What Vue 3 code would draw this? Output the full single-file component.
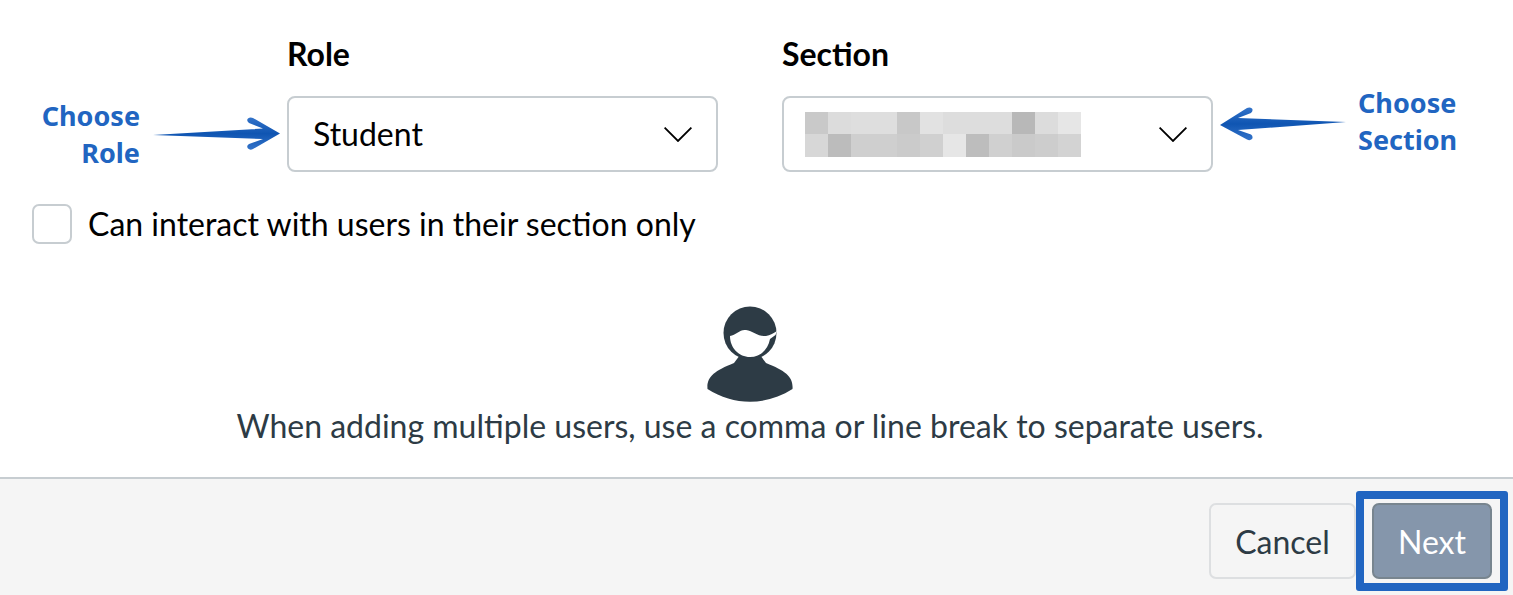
<script setup>
const blurred = [
  '#c9c9c9','#dcdcdc','#dedede','#dedede','#c8c8c8','#e2e2e2','#dddddd','#dddddd','#dddddd','#b8b8b8','#dcdcdc','#e6e6e6',
  '#d7d7d7','#bcbcbc','#cfcfcf','#cfcfcf','#cbcbcb','#d0d0d0','#e6e6e6','#bdbdbd','#d0d0d0','#cacaca','#cdcdcd','#d3d3d3'
]
</script>

<template>
  <div class="page">
    <section class="top">
      <div class="fields">
        <div class="label role-label">Role</div>
        <div class="label section-label">Section</div>

        <div class="side side-left">
          <div class="callout">Choose<br />Role</div>
          <svg class="arrow" width="127" height="34" viewBox="0 0 127 34">
            <defs>
              <linearGradient id="arrowA" x1="0" y1="0" x2="0" y2="1">
                <stop offset="0" stop-color="#3373c9" />
                <stop offset="0.5" stop-color="#0f55b2" />
                <stop offset="1" stop-color="#3373c9" />
              </linearGradient>
            </defs>
            <path d="M0 18 L110 11.500 L96 6 Q93 3.500 95 1.500 Q97 0 100 1 L127 16.500 L100 32 Q97 33.500 95 31.500 Q93 29 96 27 L110 22 Z" fill="url(#arrowA)" />
          </svg>
        </div>

        <div class="select">
          <span class="select-value">Student</span>
          <svg class="chevron" width="28" height="15" viewBox="0 0 28 15"><path d="M0.600 0.600 L14 14 L27.400 0.600" /></svg>
        </div>

        <div class="select select-section">
          <div class="pixels">
            <i v-for="(c, i) in blurred" :key="i" :style="{ background: c }"></i>
          </div>
          <svg class="chevron" width="28" height="15" viewBox="0 0 28 15"><path d="M0.600 0.600 L14 14 L27.400 0.600" /></svg>
        </div>

        <div class="side side-right">
          <svg class="arrow arrow-right" width="127" height="34" viewBox="0 0 127 34">
            <defs>
              <linearGradient id="arrowB" x1="0" y1="0" x2="0" y2="1">
                <stop offset="0" stop-color="#3373c9" />
                <stop offset="0.5" stop-color="#0f55b2" />
                <stop offset="1" stop-color="#3373c9" />
              </linearGradient>
            </defs>
            <path d="M126 15 L18 11 L31 6 Q33.500 3.500 32 1.500 Q30 0 27 1 L0 18 L27 32.500 Q30 34 32 32 Q33.500 29.500 31 27.500 L18 23 Z" fill="url(#arrowB)" />
          </svg>
          <div class="callout callout-right">Choose<br />Section</div>
        </div>
      </div>

      <div class="check-row">
        <span class="checkbox"></span>
        <span class="check-text">Can interact with users in their section only</span>
      </div>

      <div class="empty">
        <svg class="person" width="120" height="114" viewBox="0 0 120 114">
          <circle cx="60" cy="38" r="26.500" fill="#2d3b45" />
          <path d="M17.500 94 C16.500 82 24 76 44 68 L50 60 L70 60 L76 68 C96 76 103.500 82 102.500 94 C76 111 44 111 17.500 94 Z" fill="#2d3b45" />
          <path d="M40 41 C46 40 50 34 56 35 C63 36 68 42 76 41 C80 40.500 84 38 87 36 L85.500 40 L80 44 C78 55 70 62 60 62 C49 62 40 53 40 41 Z" fill="#ffffff" />
        </svg>
        <p class="hint">When adding multiple users, use a comma or line break to separate users.</p>
      </div>
    </section>

    <footer class="footer">
      <button class="btn cancel" type="button">Cancel</button>
      <div class="highlight">
        <button class="btn next" type="button">Next</button>
      </div>
    </footer>
  </div>
</template>

<style>
html, body { margin: 0; background: #fff; overflow: hidden; }
</style>

<style scoped>
.page {
  width: 1513px;
  height: 595px;
  display: flex;
  flex-direction: column;
  font-family: Lato, "Liberation Sans", sans-serif;
  overflow: hidden;
}
.top {
  height: 477px;
  box-sizing: border-box;
  padding-top: 34px;
}
.fields {
  display: grid;
  grid-template-columns: 287px 431px 64px 431px 1fr;
  grid-template-rows: 40px 76px;
  row-gap: 22px;
}
.label {
  font-size: 32px;
  font-weight: 700;
  line-height: 40px;
  color: #000;
}
.role-label { grid-column: 2; grid-row: 1; }
.section-label { grid-column: 4; grid-row: 1; }
.side {
  display: flex;
  align-items: center;
  grid-row: 2;
}
.side-left { grid-column: 1; justify-content: flex-end; padding-right: 7px; gap: 13px; }
.side-right { grid-column: 5; padding-left: 7px; gap: 11px; }
.arrow { flex: none; }
.arrow-right { margin-bottom: 20px; }
.callout {
  font-family: "Noto Sans", "Open Sans", sans-serif;
  font-weight: 700;
  font-size: 27px;
  line-height: 37px;
  color: #2165c1;
  text-align: right;
}
.callout-right { text-align: left; margin-bottom: 26px; }
.select {
  grid-row: 2;
  grid-column: 2;
  box-sizing: border-box;
  height: 76px;
  border: 2px solid #c7cdd1;
  border-radius: 8px;
  background: #fff;
  display: flex;
  align-items: center;
  justify-content: space-between;
  padding: 0 24px;
}
.select-section {
  grid-column: 4;
  padding-left: 21px;
  padding-right: 24px;
}
.select-value {
  font-size: 32px;
  color: #000;
  margin-bottom: 2px;
}
.chevron path {
  fill: none;
  stroke: #000;
  stroke-width: 1.8;
}
.pixels {
  display: grid;
  grid-template-columns: repeat(12, 23px);
  grid-auto-rows: 22.5px;
}
.check-row {
  display: flex;
  align-items: center;
  gap: 16px;
  height: 40px;
  margin: 32px 0 0 32px;
}
.checkbox {
  width: 40px;
  height: 40px;
  box-sizing: border-box;
  border: 2px solid #c7cdd1;
  border-radius: 7px;
  background: #fff;
}
.check-text {
  font-size: 32px;
  line-height: 38px;
  color: #000;
}
.empty {
  margin-top: 51px;
  padding-right: 13px;
  display: flex;
  flex-direction: column;
  align-items: center;
}
.person { display: block; }
.hint {
  margin: -1px 0 0;
  font-size: 32px;
  line-height: 36px;
  color: #2d3b45;
}
.footer {
  flex: 1;
  box-sizing: border-box;
  border-top: 2px solid #c7cdd1;
  background: #f5f5f5;
  display: flex;
  justify-content: flex-end;
  align-items: flex-start;
  padding: 12px 5px 0 0;
}
.btn {
  box-sizing: border-box;
  height: 76px;
  border-radius: 7px;
  font-family: inherit;
  font-size: 32px;
  padding: 0;
}
.cancel {
  width: 147px;
  margin-top: 12px;
  margin-right: 0;
  background: #f5f5f5;
  border: 2px solid #dddfe1;
  color: #2d3b45;
}
.highlight {
  border: 8px solid #2165c1;
  border-radius: 3px;
  padding: 4px 8px;
  display: flex;
}
.next {
  width: 120px;
  background: #8596ab;
  border: 2px solid #78858f;
  color: #fff;
}
</style>
